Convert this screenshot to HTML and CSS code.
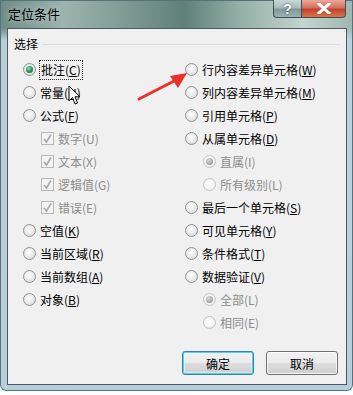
FILE: index.html
```html
<!DOCTYPE html>
<html lang="zh-CN">
<head>
<meta charset="UTF-8" />
<meta name="viewport" content="width=device-width, initial-scale=1.0"/>
<title>定位条件</title>
<link rel="stylesheet" href="styles.css">
</head>
<body>

<div class="window">
  <div class="titlebar">
    <span class="title">定位条件</span>
    <div class="caption-buttons">
      <span class="cap-btn help">?</span>
      <span class="cap-btn close">
        <svg width="14" height="11" viewBox="0 0 14 11"><path d="M2 1 L12 10 M12 1 L2 10" stroke="#fff" stroke-width="3" stroke-linecap="square"/></svg>
      </span>
    </div>
  </div>

  <div class="client">
    <div class="group-label"><span>选择</span><i class="rule"></i></div>

    <div class="columns">
      <div class="col">
        <div class="row"><span class="radio on"></span><span class="label focus">批注(<u>C</u>)</span></div>
        <div class="row"><span class="radio"></span><span class="label">常量(<u>N</u>)</span></div>
        <div class="row"><span class="radio"></span><span class="label">公式(<u>F</u>)</span></div>
        <div class="row sub"><span class="check"></span><span class="label off">数字(U)</span></div>
        <div class="row sub"><span class="check"></span><span class="label off">文本(X)</span></div>
        <div class="row sub"><span class="check"></span><span class="label off">逻辑值(G)</span></div>
        <div class="row sub"><span class="check"></span><span class="label off">错误(E)</span></div>
        <div class="row"><span class="radio"></span><span class="label">空值(<u>K</u>)</span></div>
        <div class="row"><span class="radio"></span><span class="label">当前区域(<u>R</u>)</span></div>
        <div class="row"><span class="radio"></span><span class="label">当前数组(<u>A</u>)</span></div>
        <div class="row"><span class="radio"></span><span class="label">对象(<u>B</u>)</span></div>
      </div>

      <div class="col">
        <div class="row"><span class="radio"></span><span class="label">行内容差异单元格(<u>W</u>)</span></div>
        <div class="row"><span class="radio"></span><span class="label">列内容差异单元格(<u>M</u>)</span></div>
        <div class="row"><span class="radio"></span><span class="label">引用单元格(<u>P</u>)</span></div>
        <div class="row"><span class="radio"></span><span class="label">从属单元格(<u>D</u>)</span></div>
        <div class="row sub"><span class="radio dim on"></span><span class="label off">直属(I)</span></div>
        <div class="row sub"><span class="radio dim"></span><span class="label off">所有级别(L)</span></div>
        <div class="row"><span class="radio"></span><span class="label">最后一个单元格(<u>S</u>)</span></div>
        <div class="row"><span class="radio"></span><span class="label">可见单元格(<u>Y</u>)</span></div>
        <div class="row"><span class="radio"></span><span class="label">条件格式(<u>T</u>)</span></div>
        <div class="row"><span class="radio"></span><span class="label">数据验证(<u>V</u>)</span></div>
        <div class="row sub"><span class="radio dim on"></span><span class="label off">全部(L)</span></div>
        <div class="row sub"><span class="radio dim"></span><span class="label off">相同(E)</span></div>
      </div>
    </div>

    <div class="buttons">
      <button class="btn default">确定</button>
      <button class="btn">取消</button>
    </div>
  </div>
</div>

<!-- annotation arrow and mouse pointer drawn over the dialog -->
<svg class="arrow" width="353" height="395" viewBox="0 0 353 395">
  <path d="M139 99 L176 80" stroke="#e8322a" stroke-width="3" stroke-linecap="round"/>
  <path d="M187 73 L170 76 L178 88 Z" fill="#e8322a"/>
</svg>
<svg class="cursor" width="14" height="21" viewBox="0 0 14 21">
  <path d="M1 1 L1 16 L4.5 12.5 L7 19 L9.5 18 L7 11.8 L12 11.8 Z" fill="#fff" stroke="#000" stroke-width="1" stroke-linejoin="round"/>
</svg>

</body>
</html>
```

FILE: styles.css
```css
html, body {
  margin: 0;
  padding: 0;
  background: #ffffff;
}

body {
  font-family: "Noto Sans CJK SC", "Liberation Sans", sans-serif;
  font-size: 12px;
  color: #000;
  width: 353px;
  height: 395px;
  overflow: hidden;
  position: relative;
}

.window {
  width: 353px;
  height: 391px;
  box-sizing: border-box;
  padding: 0 6px 6px 7px;
  border-radius: 0 0 6px 6px;
  background:
    linear-gradient(180deg, rgba(255,255,255,0) 0, rgba(255,255,255,0) 28px, rgba(190,214,226,0.9) 40px, #b5cfdc 100%),
    linear-gradient(90deg, #6d8b86 0, #9cb4ad 18%, #7f9c95 35%, #5f8079 52%, #94b0a7 68%, #c4d4ce 86%, #9fb6b0 100%);
  box-shadow: inset 0 0 0 1px #5b6f76;
  display: flex;
  flex-direction: column;
}

.titlebar {
  height: 28px;
  display: flex;
  align-items: flex-start;
  justify-content: space-between;
}

.title {
  margin-top: 5px;
  margin-left: 1px;
  font-size: 13px;
  line-height: 18px;
  color: #000;
  text-shadow: 0 0 6px rgba(255,255,255,0.7);
}

.caption-buttons {
  display: flex;
  margin-right: 1px;
}

.cap-btn {
  height: 18px;
  box-sizing: border-box;
  border: 1px solid #3d4f55;
  border-top: none;
  display: flex;
  align-items: center;
  justify-content: center;
}

.help {
  width: 28px;
  border-radius: 0 0 0 4px;
  border-right: none;
  background: linear-gradient(180deg, #c9d6d6 0, #a8bcbc 45%, #7f9898 55%, #9ab3b2 100%);
  color: #fff;
  font-family: "Liberation Sans", sans-serif;
  font-weight: bold;
  font-size: 14px;
  text-shadow: 0 0 2px #2a3a3a;
}

.close {
  width: 45px;
  border-radius: 0 0 4px 0;
  background: linear-gradient(180deg, #e9a89a 0, #d4705e 45%, #c2412c 55%, #d6754c 100%);
}

.client {
  flex: 1;
  background: #f0f0f0;
  border: 1px solid #4c5a60;
  display: flex;
  flex-direction: column;
  padding: 7px 0 0 0;
}

.group-label {
  display: flex;
  align-items: center;
  padding-left: 6px;
  padding-right: 6px;
  height: 16px;
  line-height: 16px;
}

.group-label .rule {
  flex: 1;
  height: 1px;
  background: #d5dfe5;
  margin-left: 5px;
}

.columns {
  display: grid;
  grid-template-columns: 162px 1fr;
  padding-left: 15px;
  margin-top: 6px;
}

.col {
  display: flex;
  flex-direction: column;
}

.row {
  height: 23px;
  display: flex;
  align-items: center;
}

.row.sub {
  padding-left: 18px;
}

.label {
  margin-left: 4px;
  line-height: 16px;
  white-space: nowrap;
}

.label u {
  text-underline-offset: 1px;
}

.label.off {
  color: #8d8d8d;
}

.label.focus {
  outline: 1px dotted #333;
  outline-offset: 1px;
  margin-left: 5px;
}

.radio {
  width: 13px;
  height: 13px;
  box-sizing: border-box;
  border-radius: 50%;
  border: 1px solid #8f9395;
  background: radial-gradient(circle at 45% 40%, #ffffff 0, #f0f0f0 35%, #cfd1d2 100%);
  position: relative;
  flex: none;
}

.radio.on::after {
  content: "";
  position: absolute;
  left: 2px;
  top: 2px;
  width: 7px;
  height: 7px;
  border-radius: 50%;
  background: radial-gradient(circle at 40% 35%, #8fe6b8 0, #2e9a67 45%, #145638 100%);
}

.radio.dim {
  border-color: #c2c4c5;
  background: radial-gradient(circle at 45% 40%, #ffffff 0, #f4f4f4 50%, #e2e3e3 100%);
}

.radio.dim.on::after {
  background: radial-gradient(circle at 40% 35%, #d8d8d8 0, #a9a9a9 60%, #8f8f8f 100%);
}

.check {
  width: 13px;
  height: 13px;
  box-sizing: border-box;
  border: 1px solid #b8b8b8;
  background: #f4f4f4 url("data:image/svg+xml;utf8,<svg xmlns='http://www.w3.org/2000/svg' width='11' height='11'><path d='M2 6 L4.5 9 L9 1.5' fill='none' stroke='%23a8a8a8' stroke-width='1.6'/></svg>") no-repeat center;
  flex: none;
}

.buttons {
  display: flex;
  justify-content: flex-end;
  gap: 12px;
  padding-right: 8px;
  margin-top: 17px;
}

.btn {
  width: 72px;
  height: 24px;
  font-family: inherit;
  font-size: 12px;
  padding: 0;
  border: 1px solid #707070;
  border-radius: 3px;
  background: linear-gradient(180deg, #f2f2f2 0, #ebebeb 48%, #dddddd 52%, #cfcfcf 100%);
  box-shadow: inset 0 0 0 1px rgba(255,255,255,0.8);
  color: #000;
}

.btn.default {
  border-color: #3c7fb1;
  box-shadow: inset 0 0 0 1px #48d6e8, inset 0 0 0 2px rgba(255,255,255,0.4);
}

.arrow {
  position: absolute;
  left: 0;
  top: 0;
  pointer-events: none;
}

.cursor {
  position: absolute;
  left: 68px;
  top: 85px;
}
```
